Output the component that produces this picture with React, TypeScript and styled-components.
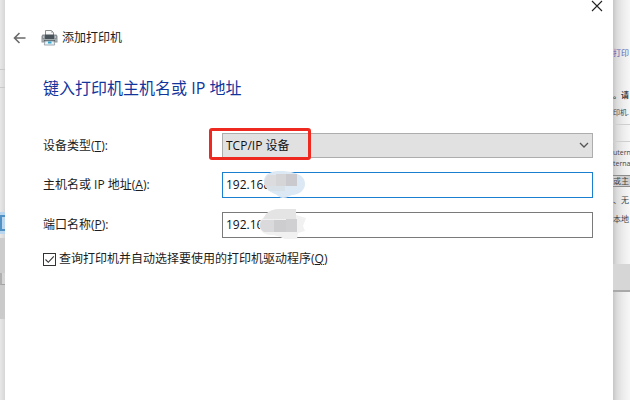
import React, { useState } from "react";
import styled, { createGlobalStyle } from "styled-components";

const GlobalStyle = createGlobalStyle`
  * { box-sizing: border-box; }
  body {
    margin: 0;
    font-family: "Open Sans", "Noto Sans CJK SC", sans-serif;
    font-size: 12px;
    line-height: 18px;
    color: #1c1c1c;
    background: #f4f4f4;
  }
`;

const Desktop = styled.div`
  display: grid;
  grid-template-columns: 5px minmax(0, 1fr) 17px;
  min-height: 100vh;
  overflow: hidden;
`;

const LeftStrip = styled.div`
  display: flex;
  flex-direction: column;
  overflow: hidden;
  background: linear-gradient(to right, #e8e8e8, #d6d6d6);
`;

const RightStrip = styled.div`
  display: flex;
  flex-direction: column;
  overflow: hidden;
  background: linear-gradient(to right, #c6c6c6 0, #dcdcdc 4px, #ececec 10px, #f7f7f7 17px);
`;

const Band = styled.div<{ $h: number; $fill?: string }>`
  flex: 0 0 ${(p) => p.$h}px;
  background: ${(p) => p.$fill ?? "transparent"};
`;

const BlueButtonEdge = styled.div`
  flex: 0 0 18px;
  padding: 3px 0;
  background: #b9d6ee;

  &::before {
    content: "";
    display: block;
    height: 12px;
    border: 2px solid #5291c4;
    border-right: 0;
  }
`;

const CornerEdge = styled.div`
  flex: 0 0 12px;
  border-left: 2px solid #b0b0b0;
  border-bottom: 1px solid #a2a2a2;
  background: #d4d4d4;
`;

const Snippet = styled.div<{ $h: number; $size?: number; $color?: string; $bold?: boolean; $boxed?: boolean }>`
  flex: 0 0 ${(p) => p.$h}px;
  display: flex;
  align-items: center;
  white-space: nowrap;
  font-size: ${(p) => p.$size ?? 8}px;
  line-height: 10px;
  color: ${(p) => p.$color ?? "#444"};
  font-weight: ${(p) => (p.$bold ? 700 : 400)};
  border: 0 solid #8b8b8b;
  border-width: ${(p) => (p.$boxed ? "1px 0" : "0")};
  background: ${(p) => (p.$boxed ? "#cfcfcf" : "transparent")};
`;

const Dialog = styled.main`
  display: flex;
  flex-direction: column;
  background: #fff;
`;

const TitleBar = styled.div`
  display: flex;
  justify-content: flex-end;
  padding-right: 10px;
`;

const IconButton = styled.button`
  display: grid;
  place-items: center;
  padding: 0;
  border: 0;
  background: transparent;
  color: inherit;
`;

const Header = styled.header`
  display: flex;
  align-items: center;
  height: 24px;
  margin-top: 14px;
  padding-left: 8px;
`;

const PrinterMark = styled.span`
  display: flex;
  margin: 0 4px 2px 14px;
`;

const Title = styled.span`
  font-size: 12px;
`;

const Body = styled.form`
  display: flex;
  flex-direction: column;
  padding: 26px 20px 0 38px;
`;

const Heading = styled.h1`
  margin: 0 0 33px;
  font-size: 16px;
  line-height: 24px;
  font-weight: 400;
  color: #12359c;
`;

const Fields = styled.div`
  display: grid;
  grid-template-columns: 179px minmax(0, 1fr);
  row-gap: 14px;
  align-items: center;
`;

const FieldLabel = styled.label`
  white-space: nowrap;
`;

const Control = styled.div`
  position: relative;
  display: flex;
`;

const Select = styled.select`
  appearance: none;
  width: 100%;
  height: 25px;
  padding: 0 24px 0 3px;
  border: 1px solid #adadad;
  border-radius: 0;
  background: #e1e1e1;
  color: #111;
  font: inherit;
`;

const TextInput = styled.input`
  width: 100%;
  height: 26px;
  padding: 0 3px 2px;
  border: 1px solid #7a7a7a;
  border-radius: 0;
  background: #fff;
  color: #111;
  font: inherit;
  outline: 0;

  &[data-active="true"] {
    border-color: #1a7fd0;
  }
`;

const Chevron = styled.svg`
  position: absolute;
  right: 4px;
  top: 9px;
  pointer-events: none;
`;

const Highlight = styled.span`
  position: absolute;
  left: -13px;
  top: -5px;
  width: 102px;
  height: 32px;
  border: 3px solid #ee2a20;
  border-radius: 3px;
  pointer-events: none;
`;

const Smudge = styled.svg`
  position: absolute;
  left: 36px;
  top: -4px;
  pointer-events: none;
`;

const CheckRow = styled.label`
  display: flex;
  align-items: center;
  gap: 3px;
  margin-top: 12px;
  white-space: nowrap;
`;

const Checkbox = styled.input`
  appearance: none;
  flex: none;
  width: 13px;
  height: 13px;
  margin: 0;
  border: 1px solid #333;
  background: #fff;

  &:checked {
    background: #fff
      url("data:image/svg+xml,%3Csvg xmlns='http://www.w3.org/2000/svg' viewBox='0 0 11 11'%3E%3Cpath d='M1.5 5.5l2.8 2.8L9.8 2.3' fill='none' stroke='%23333' stroke-width='1.1'/%3E%3C/svg%3E");
  }
`;

function BackIcon() {
  return (
    <svg width="14" height="12" viewBox="0 0 14 12" fill="none" stroke="#6a6a6a" strokeWidth="1.6">
      <path d="M12.5 6H2M6.5 1L1.5 6l5 5" />
    </svg>
  );
}

function CloseIcon() {
  return (
    <svg width="12" height="12" viewBox="0 0 12 12" fill="none" stroke="#222" strokeWidth="1.1">
      <path d="M1 1l10 10M11 1L1 11" />
    </svg>
  );
}

function PrinterIcon() {
  return (
    <svg width="17" height="17" viewBox="0 0 17 17">
      <path d="M4.5 6V1.5h6l2 2V6" fill="#f8f8f8" stroke="#8a8f92" />
      <path d="M10.5 1.5v2h2" fill="none" stroke="#a5a9ac" strokeWidth=".7" />
      <path d="M1.5 5.5H4v2h9v-2h2.5l1 1.5v6.5H.5V7z" fill="#8d9498" />
      <path d="M4 5.5h9v4.5H4z" fill="#48535a" />
      <path d="M1 10h15v2.5H1z" fill="#a4abae" />
      <path d="M3 11h11v1.5H3z" fill="#566169" />
      <path d="M4 12h9l.7 4H3.3z" fill="#e9f3f7" stroke="#89969e" strokeWidth=".8" />
      <path d="M7 12.5h3.5v2H7z" fill="#36a5cb" />
      <path d="M2 8h1.2M13.8 8H15" stroke="#e9eeee" />
    </svg>
  );
}

function HostSmudge() {
  return (
    <Smudge width="50" height="32" viewBox="0 0 50 32">
      <path d="M7 9C10 4 16 3 22 3c8 0 13 1 17 3 6 2 8 6 8 10 0 6-5 10-12 11-4 0-4 3-10 3-4 0-5-3-8-4C11 24 3 17 7 9z" fill="#dce8f3" />
      <path d="M10 7h8v11H7C6 14 7 9 10 7z" fill="#dcdcdf" />
      <path d="M18 6h10v12H18z" fill="#d5d5d8" />
      <path d="M28 6h11v12H28z" fill="#cacace" />
      <path d="M7 18h20v5H11z" fill="#d8e0e8" />
    </Smudge>
  );
}

function PortSmudge() {
  return (
    <Smudge width="50" height="34" viewBox="0 0 50 34">
      <path d="M7 8C10 2 17 1 24 1h14v6l10 3-3 8 2 5-7 2-1 6H27c-5-2-8-4-15-4-5 0-10-4-11-9-1-6 4-7 6-10z" fill="#f1f1f2" />
      <path d="M8 6c4-4 9-5 15-5h15v10H5z" fill="#e4e4e5" />
      <path d="M4 12h12v12H6c-5-3-5-8-2-12z" fill="#dadadc" />
      <path d="M16 12h12v12H16z" fill="#cdcdd0" />
      <path d="M28 11h11v13H28z" fill="#d0d0d3" />
    </Smudge>
  );
}

export default function App() {
  const [host, setHost] = useState("192.168");
  const [port, setPort] = useState("192.16");
  const [query, setQuery] = useState(true);

  return (
    <>
      <GlobalStyle />
      <Desktop>
        <LeftStrip aria-hidden="true">
          <Band $h={69} />
          <Band $h={1} $fill="#c9c9c9" />
          <Band $h={17} />
          <Band $h={1} $fill="#c9c9c9" />
          <Band $h={124} />
          <BlueButtonEdge />
          <Band $h={4} />
          <Band $h={35} $fill="#cccccc" />
          <CornerEdge />
          <Band $h={34} $fill="#cacaca" />
        </LeftStrip>

        <Dialog aria-labelledby="wizard-heading">
          <TitleBar>
            <IconButton type="button" aria-label="关闭">
              <CloseIcon />
            </IconButton>
          </TitleBar>
          <Header>
            <IconButton type="button" aria-label="返回">
              <BackIcon />
            </IconButton>
            <PrinterMark>
              <PrinterIcon />
            </PrinterMark>
            <Title>添加打印机</Title>
          </Header>
          <Body onSubmit={(e) => e.preventDefault()}>
            <Heading id="wizard-heading">键入打印机主机名或 IP 地址</Heading>
            <Fields>
              <FieldLabel htmlFor="device">
                设备类型(<u>T</u>):
              </FieldLabel>
              <Control>
                <Select id="device" defaultValue="tcp">
                  <option value="tcp">TCP/IP 设备</option>
                </Select>
                <Chevron width="10" height="7" viewBox="0 0 10 7" fill="none" stroke="#555" strokeWidth="1.3">
                  <path d="M1 1l4 4 4-4" />
                </Chevron>
                <Highlight />
              </Control>

              <FieldLabel htmlFor="host">
                主机名或 IP 地址(<u>A</u>):
              </FieldLabel>
              <Control>
                <TextInput id="host" data-active="true" value={host} onChange={(e) => setHost(e.target.value)} />
                <HostSmudge />
              </Control>

              <FieldLabel htmlFor="port">
                端口名称(<u>P</u>):
              </FieldLabel>
              <Control>
                <TextInput id="port" value={port} onChange={(e) => setPort(e.target.value)} />
                <PortSmudge />
              </Control>
            </Fields>
            <CheckRow>
              <Checkbox type="checkbox" checked={query} onChange={(e) => setQuery(e.target.checked)} />
              <span>
                查询打印机并自动选择要使用的打印机驱动程序(<u>Q</u>)
              </span>
            </CheckRow>
          </Body>
        </Dialog>

        <RightStrip aria-hidden="true">
          <Band $h={46} />
          <Snippet $h={14} $color="#5a5fae">打印</Snippet>
          <Band $h={28} />
          <Snippet $h={14} $bold>。请</Snippet>
          <Band $h={4} />
          <Snippet $h={14} $size={7}>印机.</Snippet>
          <Band $h={4} />
          <Band $h={1} $fill="#cfcfcf" />
          <Band $h={16} />
          <Band $h={1} $fill="#cfcfcf" />
          <Band $h={5} />
          <Snippet $h={11} $size={7}>utern</Snippet>
          <Snippet $h={11} $size={7}>terna</Snippet>
          <Band $h={6} />
          <Snippet $h={12} $boxed>或主</Snippet>
          <Band $h={7} />
          <Snippet $h={12}>、无</Snippet>
          <Band $h={7} />
          <Snippet $h={12}>本地</Snippet>
          <Band $h={39} />
          <Band $h={26} $fill="#d6d6d6" />
          <Band $h={2} $fill="#a9a9a9" />
        </RightStrip>
      </Desktop>
    </>
  );
}
